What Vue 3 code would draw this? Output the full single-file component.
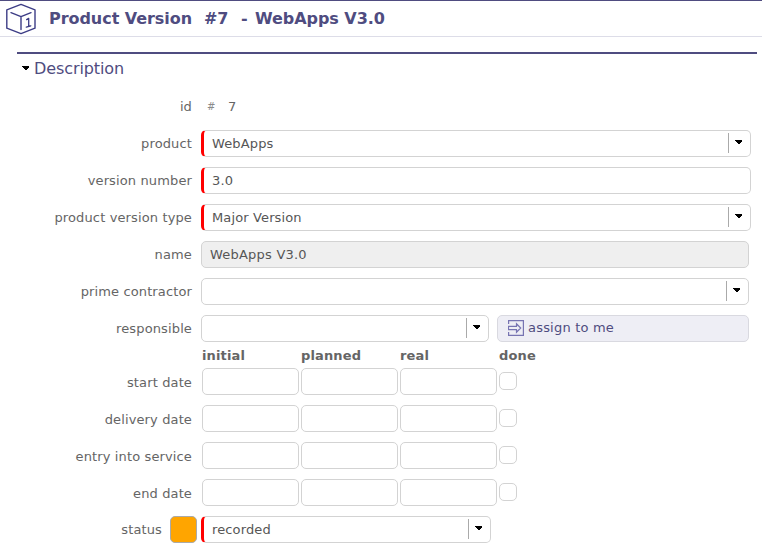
<script setup>
const topFields = [
  { label: 'product', value: 'WebApps', kind: 'select', required: true },
  { label: 'version number', value: '3.0', kind: 'text', required: true },
  { label: 'product version type', value: 'Major Version', kind: 'select', required: true },
  { label: 'name', value: 'WebApps V3.0', kind: 'readonly', required: false },
  { label: 'prime contractor', value: '', kind: 'select', required: false },
]
const dates = ['start date', 'delivery date', 'entry into service', 'end date']
</script>

<template>
  <main class="page">
    <header class="title-bar">
      <svg class="cube" width="32" height="32" viewBox="0 0 32 32" fill="none" stroke="#3d3d86" stroke-width="1.4" stroke-linejoin="round" stroke-linecap="round">
        <path d="M16 1.4 30 6.8V25.2L16 30.6 1.8 25.2V6.8Z" />
        <path d="M6 9.6 16 13.6 26 9.6M16 13.6V26.6" />
        <path d="M21.6 16.6 23.7 15.4V23.4M21.3 24.2 25.8 22.8" stroke-width="1.3" />
      </svg>
      <h1><span class="kind">Product Version</span><span class="num">#7</span><span class="dash">-</span><span>WebApps V3.0</span></h1>
    </header>

    <section class="panel">
      <div class="section-head"><svg class="arrow" width="7" height="4" viewBox="0 0 7 4"><path d="M0 0H7V1L4 4H3L0 1Z" /></svg><h2>Description</h2></div>

      <div class="row">
        <label>id</label>
        <div class="id-value"><span class="hash">#</span><span>7</span></div>
      </div>

      <div v-for="f in topFields" :key="f.label" class="row">
        <label>{{ f.label }}</label>
        <div class="field" :class="[f.kind, { required: f.required }]">
          <span class="value">{{ f.value }}</span>
          <span v-if="f.kind === 'select'" class="drop"><svg class="arrow" width="7" height="4" viewBox="0 0 7 4"><path d="M0 0H7V1L4 4H3L0 1Z" /></svg></span>
        </div>
      </div>

      <div class="row">
        <label>responsible</label>
        <div class="field short">
          <span class="value"></span>
          <span class="drop"><svg class="arrow" width="7" height="4" viewBox="0 0 7 4"><path d="M0 0H7V1L4 4H3L0 1Z" /></svg></span>
        </div>
        <button class="assign" type="button">
          <svg width="16" height="16" viewBox="0 0 16 16" fill="none" stroke="#7774b2" stroke-width="1.2">
            <path d="M.6 4V.6H15.4V15.4H.6V12" />
            <path d="M.5 6.3H8.5V3.8L12.7 8 8.5 12.2V9.7H.5Z" />
          </svg>
          <span>assign to me</span>
        </button>
      </div>

      <div class="date-head">
        <span>initial</span><span>planned</span><span>real</span><span>done</span>
      </div>

      <div v-for="d in dates" :key="d" class="row date-row">
        <label>{{ d }}</label>
        <div class="date-box"></div>
        <div class="date-box"></div>
        <div class="date-box"></div>
        <div class="check"></div>
      </div>

      <div class="row">
        <label class="with-swatch">status</label>
        <div class="swatch"></div>
        <div class="field required status">
          <span class="value">recorded</span>
          <span class="drop"><svg class="arrow" width="7" height="4" viewBox="0 0 7 4"><path d="M0 0H7V1L4 4H3L0 1Z" /></svg></span>
        </div>
      </div>
    </section>
  </main>
</template>

<style>
body {
  margin: 0;
  background: #fff;
  overflow: hidden;
}
</style>

<style scoped>
* {
  box-sizing: border-box;
}
.page {
  width: 762px;
  height: 547px;
  overflow: hidden;
  border-top: 1px solid #4f4c80;
  font: 13px/27px Verdana, "DejaVu Sans", sans-serif;
  letter-spacing: 0.13px;
  color: #656565;
}
.title-bar {
  display: flex;
  height: 36px;
  padding: 2px 0 0 5px;
  border-bottom: 1px solid #dddde8;
}
.cube {
  flex: none;
}
h1 {
  display: flex;
  margin: 0 0 0 12px;
  font-size: 16px;
  line-height: 32px;
  font-weight: bold;
  letter-spacing: -0.05px;
  color: #4f4c80;
  white-space: pre;
}
.kind {
  width: 155px;
}
.num {
  width: 37px;
}
.dash {
  width: 14px;
}
.panel {
  padding-top: 15px;
}
.section-head {
  display: flex;
  align-items: flex-start;
  height: 36px;
  width: 740px;
  margin-left: 17px;
  padding-left: 5px;
  border-top: 2px solid #4f4c80;
  color: #4f4c80;
}
.arrow {
  display: block;
  fill: #000;
  shape-rendering: crispEdges;
}
.section-head .arrow {
  margin-top: 12px;
}
h2 {
  margin: 1px 0 0 5px;
  font-size: 16px;
  font-weight: normal;
  letter-spacing: -0.1px;
}
.row {
  display: flex;
  align-items: flex-start;
  height: 37px;
  padding-top: 5px;
}
label {
  width: 192px;
  margin-right: 9px;
  flex: none;
  text-align: right;
  white-space: nowrap;
}
.id-value {
  display: flex;
  padding-left: 6px;
}
.hash {
  width: 21px;
  font-size: 10px;
  color: #8a8a8a;
}
.field {
  display: flex;
  align-items: center;
  width: 548px;
  height: 27px;
  padding-left: 8px;
  border: 1px solid #d3d3d3;
  border-radius: 5px;
  background: #fff;
  line-height: 25px;
  color: #565656;
}
.field.required {
  width: 550px;
  border-left: 3px solid #f00;
}
.field.readonly {
  background: #efefef;
  letter-spacing: 0.22px;
}
.field.short {
  width: 288px;
}
.field.status {
  width: 290px;
}
.value {
  flex: 1;
}
.drop {
  display: flex;
  width: 22px;
  height: 20px;
  padding: 7px 0 0 6px;
  align-self: flex-start;
  margin-top: 2px;
  border-left: 1px solid #aaa;
}
.assign {
  display: flex;
  align-items: center;
  gap: 4px;
  width: 252px;
  height: 27px;
  margin: 0 0 0 8px;
  padding: 0 0 2px 10px;
  border: 1px solid #d9d9e0;
  border-radius: 5px;
  background: #eeeef5;
  font: inherit;
  line-height: 23px;
  letter-spacing: 0.2px;
  color: #4f4c80;
}
.date-head {
  display: grid;
  grid-template-columns: repeat(4, 99px);
  height: 16px;
  padding-left: 202px;
  line-height: 17px;
  font-weight: bold;
}
.date-row label {
  margin-right: 10px;
  padding-top: 1px;
}
.date-box {
  width: 97px;
  height: 27px;
  margin-right: 2px;
  border: 1px solid #d3d3d3;
  border-radius: 5px;
}
.check {
  width: 18px;
  height: 18px;
  margin-top: 4px;
  border: 1px solid #d3d3d3;
  border-radius: 5px;
}
.with-swatch {
  width: 162px;
  margin-right: 8px;
}
.swatch {
  width: 27px;
  height: 27px;
  margin-right: 4px;
  border: 1px solid #aaa;
  border-radius: 5px;
  background: #ffa500;
}
</style>
